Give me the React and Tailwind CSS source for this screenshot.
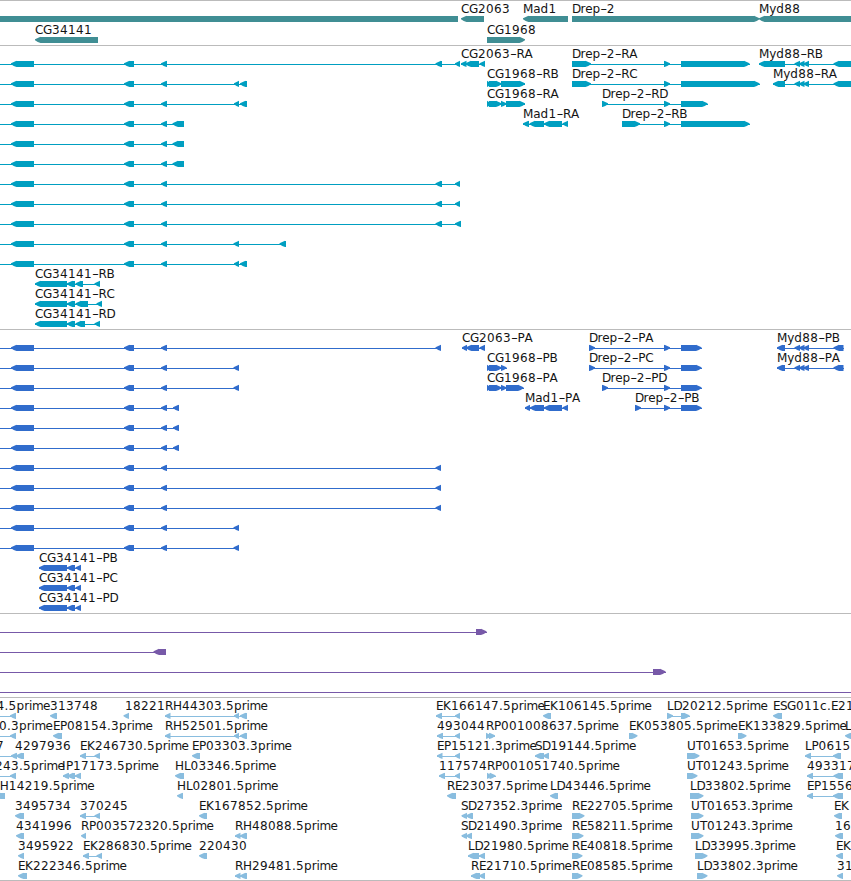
import React from "react";

const WIDTH = 851;

// Advance widths (px) of the label face at 12px.
const ADVANCE = {
  A: 8, B: 8, C: 8, D: 8.5, E: 7, G: 9, H: 9, I: 4, K: 8, L: 6.5, M: 10.3, P: 7,
  R: 8, S: 7, T: 7, U: 9, a: 7.3, c: 7, d: 8, e: 7.3, i: 3, m: 11, p: 7.8, r: 4.7,
  y: 7, ".": 4, "-": 6.5,
};

function layout(text, start) {
  const xs = [];
  let x = start;
  for (const ch of text) {
    xs.push(x);
    x += ADVANCE[ch] ?? 8;
  }
  return xs;
}

function Label({ x, text }) {
  const xs = layout(text, x);
  const runs = [];
  let at = 0;
  for (const part of text.split(/(-)/)) {
    if (part) runs.push({ part, xs: xs.slice(at, at + part.length) });
    at += part.length;
  }
  return (
    <text y="11" className="fill-[#141414]">
      {runs.map((r, i) =>
        r.part === "-" ? (
          <tspan key={i} x={r.xs[0]} textLength="7" lengthAdjust="spacingAndGlyphs">-</tspan>
        ) : (
          <tspan key={i} x={r.xs.join(" ")}>{r.part}</tspan>
        )
      )}
    </text>
  );
}

// A block is [start, end]; its tip points along the strand.
function Block({ start, end, dir }) {
  const t = Math.min(5.5, end - start);
  const points =
    dir === "L"
      ? `${start},16.2 ${start + t},13.8 ${start + t},14 ${end},14 ${end},20 ${start + t},20 ${start + t * 0.5},19 ${start},17.2`
      : dir === "R"
        ? `${end},16.2 ${end - t},13.8 ${end - t},14 ${start},14 ${start},20 ${end - t},20 ${end - t * 0.5},19 ${end},17.2`
        : `${start},14 ${end},14 ${end},20 ${start},20`;
  return <polygon points={points} />;
}

// Feature: [label, labelX, direction, blocks, lineStart?, lineEnd?]
function Feature({ f }) {
  const [label, x, dir, blocks, from, to] = f;
  const a = from ?? blocks[0][0];
  const b = to ?? blocks[blocks.length - 1][1];
  return (
    <g>
      {(blocks.length !== 1 || from !== undefined) && (
        <rect x={a} y="17" width={b - a} height="1" shapeRendering="crispEdges" />
      )}
      {blocks.map((s, i) => <Block key={i} start={s[0]} end={s[1]} dir={dir} />)}
      {label && <Label x={x} text={label} />}
    </g>
  );
}

function Track({ rows, color, tall, pad }) {
  return (
    <section className={`flex flex-col border-t border-[#bbbbbb] pt-px ${pad}`}>
      {rows.map((row, i) => (
        <svg
          key={i}
          width={WIDTH}
          className={`block shrink-0 overflow-visible text-[12px] ${tall ? "h-[21px]" : "h-5"} ${color}`}
        >
          {row.map((f, j) => <Feature key={j} f={f} />)}
        </svg>
      ))}
    </section>
  );
}

const genes = [
  [
    ["", 0, "N", [[0, 458]]],
    ["CG2063", 461, "L", [[461, 484]]],
    ["Mad1", 523, "L", [[523, 568]]],
    ["Drep-2", 572, "R", [[572, 759.5]]],
    ["Myd88", 759, "L", [[759, 860]]],
  ],
  [
    ["CG34141", 35, "L", [[35, 98]]],
    ["CG1968", 487, "R", [[487, 525]]],
  ],
];

const left = (...extra) => ["", 0, "L", [[11, 34], [124, 134], [161, 167], ...extra], 0];
const near = [[234, 239], [240, 247]];
const far = [[435.5, 442], [455, 460]];
const myd = [[794.5, 800], [799, 804.5], [803.5, 809]];

// left() starts its intron line at the window edge and ends it at the last block.
const transcripts = [
  [
    left(...far),
    ["CG2063-RA", 461, "L", [[461, 466.5], [465.5, 479], [479.5, 485]]],
    ["Drep-2-RA", 572, "R", [[572, 591], [664, 670], [681, 749.5]]],
    ["Myd88-RB", 759, "L", [[759, 785], ...myd, [833.5, 860]]],
  ],
  [
    left(...near),
    ["CG1968-RB", 487, "R", [[487, 491], [489, 501.5], [501, 525]]],
    ["Drep-2-RC", 572, "R", [[572, 591], [664, 670], [681, 759.5]]],
    ["Myd88-RA", 773, "L", [[773, 785], ...myd, [833.5, 860]]],
  ],
  [
    left(...near),
    ["CG1968-RA", 487, "R", [[487, 491], [489, 501.5], [501, 506.5], [506, 525]]],
    ["Drep-2-RD", 602, "R", [[602, 608], [664, 670], [681, 707.5]]],
  ],
  [
    left([172.5, 184]),
    ["Mad1-RA", 523, "L", [[523, 529], [529.5, 544], [544, 562], [562.5, 568]]],
    ["Drep-2-RB", 622, "R", [[622, 640], [664, 670], [681, 749.5]]],
  ],
  [left([172.5, 184])],
  [left([172.5, 184])],
  [left(...far)],
  [left(...far)],
  [left([435.5, 442], [455, 461])],
  [left([233.5, 239], [279.5, 286])],
  [left(...near)],
  [["CG34141-RB", 35, "L", [[35, 67], [67, 75], [75.5, 83], [94.5, 100]]]],
  [["CG34141-RC", 35, "L", [[35, 67], [67, 75], [75.5, 88], [96.5, 102]]]],
  [["CG34141-RD", 35, "L", [[35, 67], [67, 75], [75.5, 85], [94.5, 100]]]],
];

const mydCds = [[777, 785], ...myd, [833.5, 843.5]];
const proteins = [
  [
    left([435.5, 441]),
    ["CG2063-PA", 462, "L", [[462, 467], [466, 479], [479.5, 485]]],
    ["Drep-2-PA", 589, "R", [[589, 595], [664, 670], [681, 701.5]]],
    ["Myd88-PB", 777, "L", mydCds],
  ],
  [
    left([233.5, 239]),
    ["CG1968-PB", 487, "R", [[487, 491], [489, 501.5], [501, 506.5]]],
    ["Drep-2-PC", 589, "R", [[589, 595], [664, 670], [681, 701.5]]],
    ["Myd88-PA", 777, "L", mydCds],
  ],
  [
    left([233.5, 239]),
    ["CG1968-PA", 487, "R", [[487, 491], [489, 501.5], [501, 506.5], [506, 523.5]]],
    ["Drep-2-PD", 602, "R", [[602, 608], [664, 670], [681, 701.5]]],
  ],
  [
    left([173, 179]),
    ["Mad1-PA", 525, "L", [[525, 530], [530, 544], [544, 562], [562.5, 568]]],
    ["Drep-2-PB", 635, "R", [[635, 641], [664, 670], [681, 701.5]]],
  ],
  [left([173, 179])],
  [left([173, 179])],
  [left([435.5, 441])],
  [left([435.5, 441])],
  [left([435.5, 441])],
  [left([233.5, 239])],
  [left([233.5, 239])],
  [["CG34141-PB", 39, "L", [[39, 67], [67, 75], [75.5, 81]]]],
  [["CG34141-PC", 39, "L", [[39, 67], [67, 75], [75.5, 81]]]],
  [["CG34141-PD", 39, "L", [[39, 67], [67, 75], [75.5, 81]]]],
];

const spans = [
  [["", 0, "R", [[476, 486.5]], 0]],
  [["", 0, "L", [[153.5, 166]], 0]],
  [["", 0, "R", [[653, 665.5]], 0]],
  [["", 0, "N", [], 0, WIDTH]],
];

const ests = [
  [
    ["4.5prime", -3.5, "L", [[10, 16]], 0],
    ["313748", 50, "L", [[50, 57]]],
    ["18221", 125, "L", [[123.5, 129]]],
    ["RH44303.5prime", 165, "L", [[165, 170.5], ...near]],
    ["EK166147.5prime", 436, "L", [[436, 442], [455, 460]]],
    ["EK106145.5prime", 543, "L", [[543, 551]]],
    ["LD20212.5prime", 667, "R", [[667, 673], [681, 689.5]]],
    ["ESG011c.E21", 773, "L", [[773, 782]]],
  ],
  [
    ["0.3prime", -1, "L", [[10, 16]], 0],
    ["EP08154.3prime", 53, "L", [[53, 62]]],
    ["RH52501.5prime", 165, "L", [[165, 170.5], ...near]],
    ["493044", 437, "L", [[437, 443], [455, 460]]],
    ["RP001008637.5prime", 486, "R", [[486, 491], [489, 495]]],
    ["EK053805.5prime", 629, "R", [[629, 637.5]]],
    ["EK133829.5prime", 738, "R", [[738, 746.5]]],
    ["L", 845, "L", [[845, 856]]],
  ],
  [
    ["7", -4, "L", [[11, 17]], 0],
    ["4297936", 15, "L", [[16, 24]]],
    ["EK246730.5prime", 80, "L", [[80, 86], [94.5, 100]]],
    ["EP03303.3prime", 192, "L", [[192, 200]]],
    ["EP15121.3prime", 437, "L", [[437, 442.5], [455, 460]]],
    ["SD19144.5prime", 535, "L", [[535, 544], [543, 549]]],
    ["UT01653.5prime", 687, "R", [[687, 699.5]]],
    ["LP0615", 805, "L", [[805, 811], [833, 841]]],
  ],
  [
    ["243.5prime", -5, "L", [[10, 16]], 0],
    ["IP17173.5prime", 62, "L", [[63, 69], [67.5, 75], [75, 81]]],
    ["HL03346.5prime", 175, "L", [[175, 184]]],
    ["117574", 439, "L", [[439, 445], [455, 460]]],
    ["RP001051740.5prime", 487, "R", [[487, 491.5], [489.5, 495.5]]],
    ["UT01243.5prime", 687, "R", [[687, 697.5]]],
    ["493317", 807, "L", [[807, 813], [833.5, 843]]],
  ],
  [
    ["H14219.5prime", -0.3, "L", [[-5, 5]]],
    ["HL02801.5prime", 177, "L", [[177, 183]]],
    ["RE23037.5prime", 447, "L", [[447, 456]]],
    ["LD43446.5prime", 550, "L", [[550, 558]]],
    ["LD33802.5prime", 690, "R", [[690, 703.5]]],
    ["EP1556", 807, "L", [[807, 813], [833, 843]]],
  ],
  [
    ["3495734", 15, "L", [[15, 24]]],
    ["370245", 80, "L", [[80, 86], [94.5, 100]]],
    ["EK167852.5prime", 199, "L", [[199, 207]]],
    ["SD27352.3prime", 461, "L", [[461.5, 467], [466, 473]]],
    ["RE22705.5prime", 572, "R", [[572, 584.5]]],
    ["UT01653.3prime", 691, "R", [[691, 703.5]]],
    ["EK", 834, "L", [[834, 842]]],
  ],
  [
    ["4341996", 16, "L", [[16, 24]]],
    ["RP003572320.5prime", 81, "L", [[81, 86]]],
    ["RH48088.5prime", 235, "L", [[235, 240.5], [240, 247]]],
    ["SD21490.3prime", 461, "L", [[461.5, 467], [466, 472]]],
    ["RE58211.5prime", 572, "R", [[572, 583.5]]],
    ["UT01243.3prime", 691, "R", [[691, 703.5]]],
    ["16", 835, "L", [[835, 843]]],
  ],
  [
    ["3495922", 18, "L", [[18, 24]]],
    ["EK286830.5prime", 83, "L", [[83, 89], [96.5, 102]]],
    ["220430", 199, "L", [[199, 207]]],
    ["LD21980.5prime", 468, "L", [[468, 479], [479, 485]]],
    ["RE40818.5prime", 572, "R", [[572, 582.5]]],
    ["LD33995.3prime", 695, "R", [[695, 707.5]]],
    ["EK", 836, "L", [[836, 843]]],
  ],
  [
    ["EK222346.5prime", 18, "L", [[18, 27]]],
    ["RH29481.5prime", 235, "L", [[235, 240.5], [240, 247]]],
    ["RE21710.5prime", 471, "L", [[471, 480], [479, 485]]],
    ["RE08585.5prime", 572, "R", [[572, 582.5]]],
    ["LD33802.3prime", 697, "R", [[697, 707.5]]],
    ["31", 837, "L", [[837, 843]]],
  ],
];

export default function App() {
  return (
    <main className="flex w-[851px] flex-col overflow-hidden border-b border-[#bbbbbb] bg-white font-['DejaVu_Sans',sans-serif]">
      <Track rows={genes} color="fill-[#408e94]" tall pad="pb-px" />
      <Track rows={transcripts} color="fill-[#009fc1]" pad="pb-0.5" />
      <Track rows={proteins} color="fill-[#306ccc]" pad="pb-0.5" />
      <Track rows={spans} color="fill-[#7759a8]" pad="pb-0.5" />
      <Track rows={ests} color="fill-[#89bddf]" pad="pb-px" />
    </main>
  );
}
